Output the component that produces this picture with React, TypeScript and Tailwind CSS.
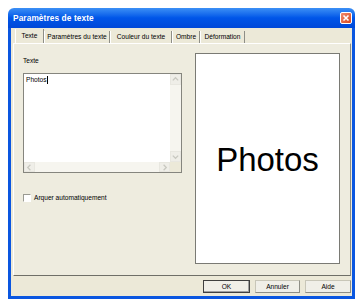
import React from "react";

const font = { fontFamily: '"Liberation Sans", Arial, sans-serif' };

function Chevron({ dir }: { dir: "up" | "down" | "left" | "right" }) {
  const d =
    dir === "up"
      ? "M2 6 L5 3 L8 6"
      : dir === "down"
      ? "M2 4 L5 7 L8 4"
      : dir === "left"
      ? "M6 2 L3 5 L6 8"
      : "M4 2 L7 5 L4 8";
  return (
    <svg width="9" height="9" viewBox="0 0 10 10">
      <path d={d} fill="none" stroke="#c8c8c0" strokeWidth="1.4" />
    </svg>
  );
}

function Tab({ label, w, selected }: { label: string; w: string; selected?: boolean }) {
  return (
    <div
      className={`${w} flex items-center justify-center border-l border-l-white border-r border-r-[#8e8e86] ${
        selected ? "h-[14px] pb-[1px]" : "h-[12px]"
      } text-[6.6px] text-black whitespace-nowrap`}
    >
      {label}
    </div>
  );
}

export default function App() {
  return (
    <div className="w-[362px] h-[305px] bg-white relative" style={font}>
      <div className="absolute left-[8px] top-[8px] w-[347px] h-[291px] flex flex-col">
        {/* Title bar */}
        <div className="h-[20px] rounded-t-[6px] bg-gradient-to-b from-[#3b8ff5] via-[#0055e8] to-[#0048d8] flex items-center justify-between pl-[5px] pr-[3px]">
          <span className="text-white font-bold text-[8.3px] tracking-[0.1px]">Paramètres de texte</span>
          <div className="w-[12px] h-[12px] rounded-[2px] border border-white bg-gradient-to-br from-[#f08a6a] to-[#d9461c] flex items-center justify-center">
            <svg width="8" height="8" viewBox="0 0 8 8">
              <path d="M1.5 1.5 L6.5 6.5 M6.5 1.5 L1.5 6.5" stroke="white" strokeWidth="1.6" />
            </svg>
          </div>
        </div>
        {/* Body */}
        <div className="flex-1 border-l-[3px] border-r-[3px] border-b-[3px] border-[#0a56e0] bg-[#ece9d8] flex flex-col">
          {/* Tabs */}
          <div className="h-[15px] flex items-end pl-[4px] pt-[1px]">
            <Tab label="Texte" w="w-[29px]" selected />
            <Tab label="Paramètres du texte" w="w-[66px]" />
            <Tab label="Couleur du texte" w="w-[62px]" />
            <Tab label="Ombre" w="w-[28px]" />
            <Tab label="Déformation" w="w-[45px]" />
          </div>
          {/* Panel */}
          <div className="ml-[2px] mr-[1px] h-[233px] border-t border-l border-t-white border-l-white border-r border-b border-r-[#8e8e86] border-b-[#6f6f68] bg-[#eeecdf] flex">
            <div className="w-[180px] flex flex-col pl-[9px] pt-[12px]">
              <div className="text-[6.6px] text-black h-[10px] leading-[10px]">Texte</div>
              <div className="mt-[7px] w-[159px] h-[100px] border border-[#85857e] bg-white flex flex-col">
                <div className="flex-1 flex">
                  <div className="flex-1 pl-[2px] pt-[2px] text-[6.6px] text-black leading-[8px] flex items-start">
                    <span>Photos</span>
                    <span className="inline-block w-[1px] h-[8px] bg-black" />
                  </div>
                  <div className="w-[11px] bg-[#f6f5ef] flex flex-col justify-between">
                    <div className="h-[11px] bg-[#efeee8] border border-[#e8e7e0] flex items-center justify-center">
                      <Chevron dir="up" />
                    </div>
                    <div className="h-[11px] bg-[#efeee8] border border-[#e8e7e0] flex items-center justify-center">
                      <Chevron dir="down" />
                    </div>
                  </div>
                </div>
                <div className="h-[10px] flex">
                  <div className="flex-1 bg-[#f6f5ef] flex justify-between">
                    <div className="w-[11px] bg-[#efeee8] border border-[#e8e7e0] flex items-center justify-center">
                      <Chevron dir="left" />
                    </div>
                    <div className="w-[11px] bg-[#efeee8] border border-[#e8e7e0] flex items-center justify-center">
                      <Chevron dir="right" />
                    </div>
                  </div>
                  <div className="w-[11px] bg-[#ece9d8]" />
                </div>
              </div>
              <div className="mt-[20px] flex items-center gap-[3px]">
                <div className="w-[8px] h-[8px] border border-[#9a9a92] border-r-white border-b-white bg-white" />
                <span className="text-[6.6px] text-black">Arquer automatiquement</span>
              </div>
            </div>
            <div className="flex-1 pt-[9px] pr-[10px] pb-[11px] pl-[1px]">
              <div className="w-full h-full border border-[#7a7a74] bg-white flex items-center justify-center">
                <span className="text-[33px] text-black leading-none mt-[2px]">Photos</span>
              </div>
            </div>
          </div>
          {/* Buttons */}
          <div className="flex justify-end gap-[5px] pr-[1px] pt-[4px]">
            <div className="w-[47px] h-[13px] border border-[#404040] bg-[#f0efe8] flex items-center justify-center text-[6.6px] text-black shadow-[inset_-1px_-1px_0_#a0a0a0]">
              OK
            </div>
            <div className="w-[45px] h-[13px] border border-[#c8c6b8] border-r-[#8e8e86] border-b-[#8e8e86] bg-[#f0efe8] flex items-center justify-center text-[6.6px] text-black">
              Annuler
            </div>
            <div className="w-[46px] h-[13px] border border-[#c8c6b8] border-r-[#8e8e86] border-b-[#8e8e86] bg-[#f0efe8] flex items-center justify-center text-[6.6px] text-black">
              Aide
            </div>
          </div>
        </div>
      </div>
    </div>
  );
}
